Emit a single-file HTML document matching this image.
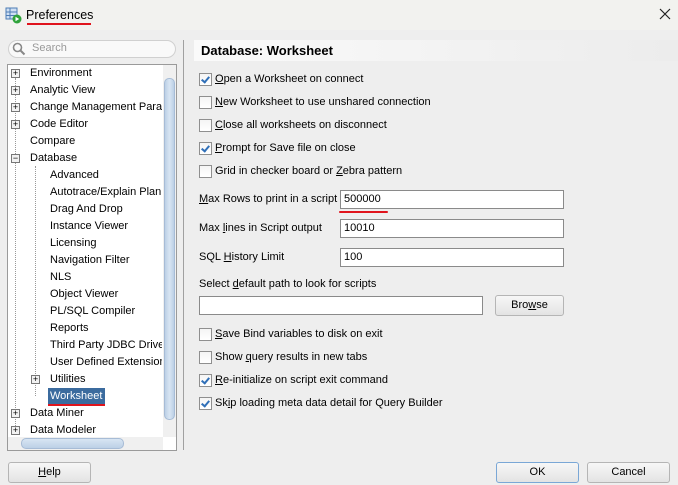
<!DOCTYPE html>
<html><head><meta charset="utf-8"><style>
*{box-sizing:border-box;margin:0;padding:0}
body{width:678px;height:485px;background:#eeeeee;font-family:"Liberation Sans",sans-serif;font-size:11px;color:#000;position:relative;overflow:hidden}
.a{position:absolute;white-space:nowrap}
.tb{position:absolute;left:0;top:0;width:678px;height:30px;background:#f2f2ef}
.cb{position:absolute;width:13px;height:13px;border:1px solid #8f8f8f;background:linear-gradient(#f4f4f4,#fff)}
.cb.c::after{content:"";position:absolute;left:3px;top:1px;width:3px;height:6px;border:solid #2f6fb8;border-width:0 2px 2px 0;transform:rotate(40deg)}
.inp{position:absolute;height:19px;border:1px solid #8a8a8a;background:#fff;padding:2px 3px;font-size:11px}
.btn{position:absolute;height:21px;border:1px solid #b5b5b5;border-radius:3px;background:linear-gradient(#f7f7f7,#e3e3e3);text-align:center;line-height:19px}
.pl{position:absolute;width:9px;height:9px;border:1px solid #777;background:#f2f2f2;font-size:9px;line-height:7px;text-align:center}
u{text-decoration:underline}
</style></head><body>
<div class="tb"></div>
<svg class="a" style="left:5px;top:7px" width="17" height="17"><rect x="1" y="1" width="11" height="11" fill="#cfe0f2" stroke="#4d7db5"/><line x1="1" y1="5" x2="12" y2="5" stroke="#4d7db5"/><line x1="1" y1="8.5" x2="12" y2="8.5" stroke="#4d7db5"/><line x1="5" y1="1" x2="5" y2="12" stroke="#4d7db5"/><circle cx="12" cy="12" r="4.5" fill="#2fa33a"/><path d="M10.5 9.8 L14.2 12 L10.5 14.2Z" fill="#fff"/></svg>
<div class="a" style="left:26px;top:8px;font-size:12.5px">Preferences</div>
<div class="a" style="left:27px;top:23px;width:64px;height:2px;background:#e0141c"></div>
<svg class="a" style="left:659px;top:8px" width="12" height="12"><path d="M1 1L11 11M11 1L1 11" stroke="#222" stroke-width="1.2"/></svg>

<div class="a" style="left:8px;top:40px;width:168px;height:18px;border:1px solid #d0d0d0;border-radius:9px;background:#f9f9f9"></div>
<svg class="a" style="left:12px;top:42px" width="14" height="14"><circle cx="5.5" cy="5.5" r="4" fill="none" stroke="#888" stroke-width="1.6"/><path d="M8.5 8.5L12.5 12.5" stroke="#888" stroke-width="2"/></svg>
<div class="a" style="left:32px;top:42px;color:#999">Search</div>

<div class="a" style="left:7px;top:64px;width:170px;height:387px;border:1px solid #9a9a9a;background:#fff"></div>
<div class="a" style="left:163px;top:65px;width:13px;height:372px;background:#f0f0f0"></div>
<div class="a" style="left:164px;top:78px;width:11px;height:342px;border-radius:5px;background:linear-gradient(90deg,#bcd0e6,#d8e5f3,#bcd0e6);border:1px solid #a7bcd6"></div>
<div class="a" style="left:8px;top:437px;width:155px;height:13px;background:#f0f0f0"></div>
<div class="a" style="left:21px;top:438px;width:103px;height:11px;border-radius:5px;background:linear-gradient(#d8e5f3,#bcd0e6);border:1px solid #a7bcd6"></div>
<div class="a" style="left:15px;top:78px;height:354px;border-left:1px dotted #999"></div>
<div class="a" style="left:35px;top:166px;height:230px;border-left:1px dotted #999"></div>

<div class="pl" style="left:11px;top:69px">+</div><div class="a" style="left:30px;top:67px">Environment</div>
<div class="pl" style="left:11px;top:86px">+</div><div class="a" style="left:30px;top:84px">Analytic View</div>
<div class="pl" style="left:11px;top:103px">+</div><div class="a" style="left:30px;top:101px;width:132px;overflow:hidden">Change Management Parameters</div>
<div class="pl" style="left:11px;top:120px">+</div><div class="a" style="left:30px;top:118px">Code Editor</div>
<div class="a" style="left:30px;top:135px">Compare</div>
<div class="pl" style="left:11px;top:154px">−</div><div class="a" style="left:30px;top:152px">Database</div>
<div class="a" style="left:50px;top:169px">Advanced</div>
<div class="a" style="left:50px;top:186px;width:112px;overflow:hidden">Autotrace/Explain Plan</div>
<div class="a" style="left:50px;top:203px">Drag And Drop</div>
<div class="a" style="left:50px;top:220px">Instance Viewer</div>
<div class="a" style="left:50px;top:237px">Licensing</div>
<div class="a" style="left:50px;top:254px">Navigation Filter</div>
<div class="a" style="left:50px;top:271px">NLS</div>
<div class="a" style="left:50px;top:288px">Object Viewer</div>
<div class="a" style="left:50px;top:305px">PL/SQL Compiler</div>
<div class="a" style="left:50px;top:322px">Reports</div>
<div class="a" style="left:50px;top:339px;width:112px;overflow:hidden">Third Party JDBC Drivers</div>
<div class="a" style="left:50px;top:356px;width:112px;overflow:hidden">User Defined Extensions</div>
<div class="pl" style="left:31px;top:375px">+</div><div class="a" style="left:50px;top:373px">Utilities</div>
<div class="a" style="left:48px;top:388px;width:57px;height:17px;background:#3b6b9e;color:#fff;padding:2px 2px">Worksheet</div>
<div class="a" style="left:48px;top:404px;width:57px;height:2px;background:#e0141c"></div>
<div class="pl" style="left:11px;top:409px">+</div><div class="a" style="left:30px;top:407px">Data Miner</div>
<div class="pl" style="left:11px;top:426px">+</div><div class="a" style="left:30px;top:424px">Data Modeler</div>

<div class="a" style="left:183px;top:40px;height:410px;border-left:1px solid #a0a0a0"></div>
<div class="a" style="left:194px;top:40px;width:484px;height:21px;background:linear-gradient(90deg,#fafafa,#ececec)"></div>
<div class="a" style="left:201px;top:43px;font-size:13px;font-weight:bold">Database: Worksheet</div>

<div class="cb c" style="left:199px;top:73px"></div><div class="a" style="left:215px;top:73px"><u>O</u>pen a Worksheet on connect</div>
<div class="cb" style="left:199px;top:96px"></div><div class="a" style="left:215px;top:96px"><u>N</u>ew Worksheet to use unshared connection</div>
<div class="cb" style="left:199px;top:119px"></div><div class="a" style="left:215px;top:119px"><u>C</u>lose all worksheets on disconnect</div>
<div class="cb c" style="left:199px;top:142px"></div><div class="a" style="left:215px;top:142px"><u>P</u>rompt for Save file on close</div>
<div class="cb" style="left:199px;top:165px"></div><div class="a" style="left:215px;top:165px">Grid in checker board or <u>Z</u>ebra pattern</div>

<div class="a" style="left:199px;top:193px"><u>M</u>ax Rows to print in a script</div>
<div class="inp" style="left:340px;top:190px;width:224px">500000</div>
<div class="a" style="left:339px;top:211px;width:49px;height:2px;background:#e0141c;border-radius:1px"></div>
<div class="a" style="left:199px;top:222px">Max <u>l</u>ines in Script output</div>
<div class="inp" style="left:340px;top:219px;width:224px">10010</div>
<div class="a" style="left:199px;top:251px">SQL <u>H</u>istory Limit</div>
<div class="inp" style="left:340px;top:248px;width:224px">100</div>
<div class="a" style="left:199px;top:278px">Select <u>d</u>efault path to look for scripts</div>
<div class="inp" style="left:199px;top:296px;width:284px"></div>
<div class="btn" style="left:495px;top:295px;width:69px">Bro<u>w</u>se</div>

<div class="cb" style="left:199px;top:328px"></div><div class="a" style="left:215px;top:328px"><u>S</u>ave Bind variables to disk on exit</div>
<div class="cb" style="left:199px;top:351px"></div><div class="a" style="left:215px;top:351px">Show <u>q</u>uery results in new tabs</div>
<div class="cb c" style="left:199px;top:374px"></div><div class="a" style="left:215px;top:374px"><u>R</u>e-initialize on script exit command</div>
<div class="cb c" style="left:199px;top:397px"></div><div class="a" style="left:215px;top:397px">Sk<u>i</u>p loading meta data detail for Query Builder</div>

<div class="btn" style="left:8px;top:462px;width:83px"><u>H</u>elp</div>
<div class="btn" style="left:496px;top:462px;width:83px;border-color:#7aa7d6">OK</div>
<div class="btn" style="left:587px;top:462px;width:83px">Cancel</div>
</body></html>
